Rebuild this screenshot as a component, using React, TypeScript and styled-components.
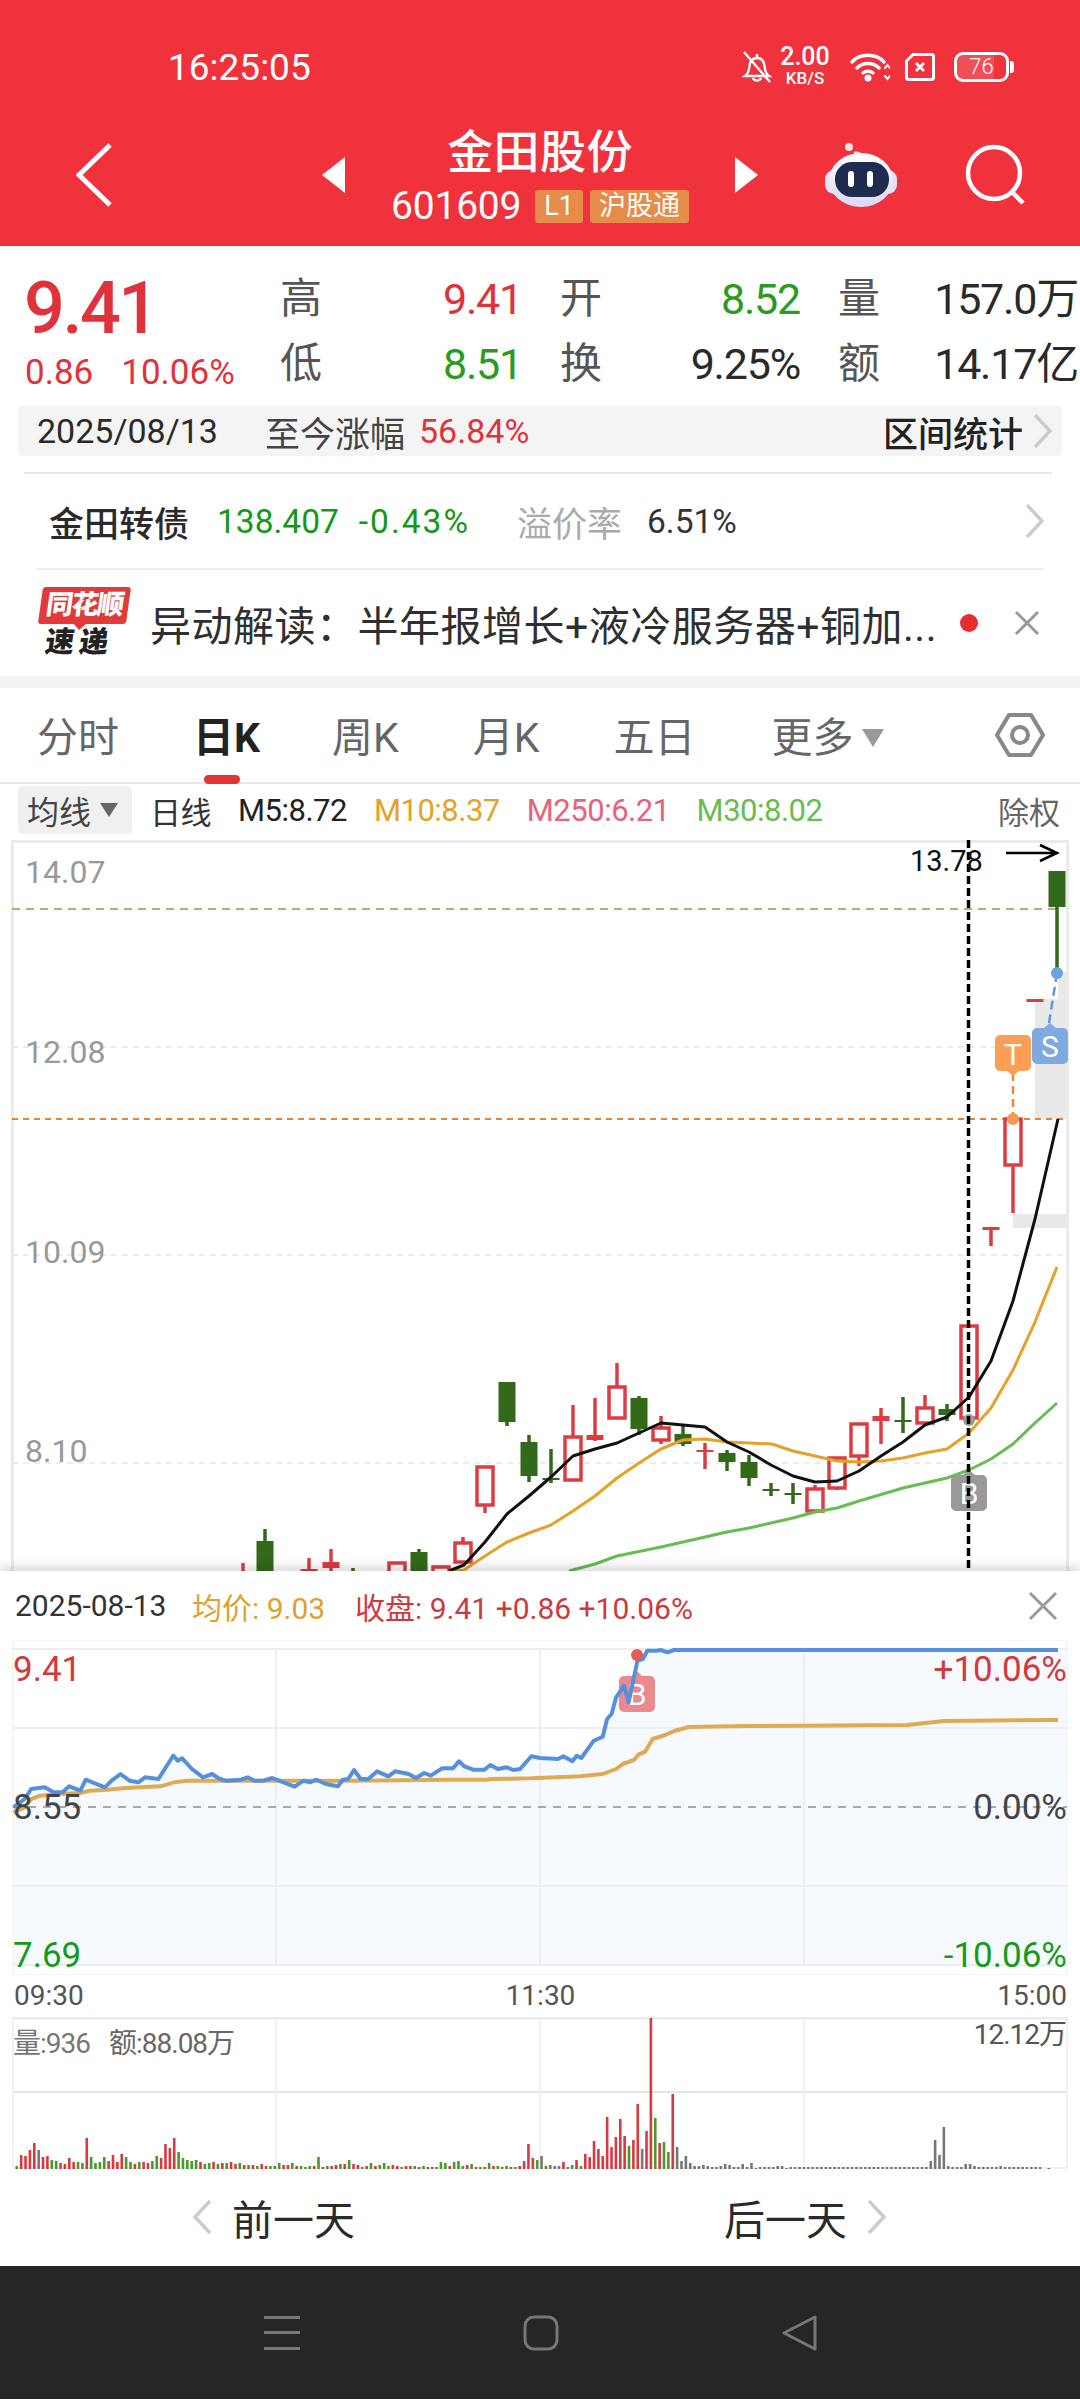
import styled, { createGlobalStyle } from "styled-components";

const RED = "#e0323a";
const GREEN = "#2a9a22";
const CANDLE_RED = "#dc3c42";
const CANDLE_GREEN = "#33691a";

const GlobalStyle = createGlobalStyle`
    html, body { margin: 0; padding: 0; background: #fff; }
    body { font-family: Roboto, "Noto Sans CJK SC", sans-serif; }
    * { box-sizing: border-box; }
`;

const Page = styled.div`
    width: 1080px;
    height: 2400px;
    overflow: hidden;
    background: #fff;
    display: flex;
    flex-direction: column;
`;

const Header = styled.header`
    height: 246px;
    background: #ef323c;
    color: #fff;
    flex: none;
`;

const StatusBar = styled.div`
    height: 44px;
    margin-top: 45px;
    display: flex;
    align-items: center;
    padding-left: 168px;
`;

const Clock = styled.div`
    font-size: 37px;
    width: 574px;
`;

const NetSpeed = styled.div`
    width: 50px;
    margin: -4px 20px 0 8px;
    text-align: center;
    line-height: 1;
    b {
        display: block;
        font-size: 25px;
        font-weight: 500;
    }
    span {
        display: block;
        font-size: 17px;
        font-weight: 500;
        margin-top: 1px;
    }
`;

const StatusIcon = styled.svg<{ $left?: number }>`
    flex: none;
    display: block;
    margin-left: ${(p) => p.$left ?? 0}px;
`;

const Battery = styled.div`
    width: 55px;
    height: 30px;
    margin-left: 19px;
    border: 3px solid #fff;
    border-radius: 9px;
    background: linear-gradient(90deg, rgba(255, 255, 255, 0.14) 76%, transparent 76%);
    font-size: 22px;
    font-weight: 300;
    line-height: 24px;
    text-align: center;
    position: relative;
    &::after {
        content: "";
        position: absolute;
        right: -8px;
        top: 6px;
        width: 4px;
        height: 12px;
        background: #fff;
        border-radius: 0 3px 3px 0;
    }
`;

const NavRow = styled.div`
    display: grid;
    grid-template-columns: 322px 436px 322px;
    margin-top: 34px;
    height: 104px;
    align-items: center;
`;

const BackButton = styled.div`
    padding-left: 76px;
    svg { display: block; }
`;

const StockTitle = styled.div`
    display: flex;
    align-items: center;
    justify-content: space-between;
`;

const Arrow = styled.div<{ $dir: "left" | "right" }>`
    width: 0;
    height: 0;
    border-top: 18px solid transparent;
    border-bottom: 18px solid transparent;
    ${(p) => (p.$dir === "left" ? "border-right: 23px solid #fff;" : "border-left: 23px solid #fff;")}
`;

const TitleBlock = styled.div`
    display: flex;
    flex-direction: column;
    align-items: center;
`;

const StockName = styled.div`
    font-size: 46px;
    font-weight: 500;
    line-height: 54px;
    letter-spacing: 0.4px;
    margin-top: -2px;
`;

const CodeRow = styled.div`
    display: flex;
    align-items: center;
    gap: 7px;
    margin-top: 10px;
    height: 34px;
`;

const StockCode = styled.div`
    font-size: 39px;
    letter-spacing: -0.2px;
    margin-right: 7px;
`;

const Tag = styled.div`
    background: #e58c4a;
    border-radius: 3px;
    height: 33px;
    padding: 0 9px;
    font-size: 27px;
    line-height: 33px;
`;

const NavActions = styled.div`
    display: flex;
    align-items: center;
    padding-left: 67px;
    gap: 68px;
    svg { display: block; flex: none; }
`;

const QuoteRow = styled.div`
    height: 160px;
    display: flex;
    flex: none;
`;

const PriceBlock = styled.div`
    width: 280px;
    padding: 27px 0 0 24px;
    color: ${RED};
`;

const BigPrice = styled.div`
    font-size: 72px;
    font-weight: 500;
    line-height: 72px;
    letter-spacing: -2.5px;
`;

const PriceChange = styled.div`
    margin-top: 8px;
    font-size: 35px;
    line-height: 40px;
    display: flex;
    gap: 28px;
    margin-left: 1px;
`;

const StatGrid = styled.div`
    display: grid;
    grid-template-columns: 42px 200px 80px 198px 80px 198px;
    grid-auto-rows: 65px;
    padding-top: 20px;
    align-items: center;
`;

const StatLabel = styled.div`
    font-size: 42px;
    color: #555;
    text-align: right;
    line-height: 50px;
`;

const StatValue = styled.div<{ $color?: string }>`
    font-size: 43px;
    text-align: right;
    letter-spacing: -1.2px;
    line-height: 50px;
    color: ${(p) => p.$color ?? "#2a2a2a"};
    white-space: nowrap;
`;

const RangeBar = styled.div`
    margin: 0 18px;
    height: 50px;
    background: #f4f4f4;
    border-radius: 4px;
    display: flex;
    align-items: center;
    padding: 0 9px 0 19px;
    flex: none;
`;

const RangeDate = styled.div`
    font-size: 34px;
    color: #2a2a2a;
    width: 228px;
`;

const RangeLabel = styled.div`
    font-size: 35px;
    color: #444;
    margin-right: 14px;
`;

const RangeValue = styled.div`
    font-size: 34px;
    color: ${RED};
    flex: 1;
`;

const RangeAction = styled.div`
    font-size: 35px;
    font-weight: 500;
    color: #222;
    margin-right: 10px;
`;

const BondRow = styled.div`
    margin: 16px 28px 0 24px;
    height: 96px;
    flex: none;
    border-top: 2px solid #e8e8e8;
    display: flex;
    align-items: center;
    padding: 0 7px 0 25px;
    font-size: 33.5px;
`;

const BondName = styled.div`
    font-size: 35px;
    font-weight: 500;
    color: #2a2a2a;
    margin-right: 28px;
`;

const BondValue = styled.div<{ $gap: number; $spacing?: number }>`
    color: #109a18;
    margin-right: ${(p) => p.$gap}px;
    letter-spacing: ${(p) => p.$spacing ?? 0}px;
`;

const BondLabel = styled.div`
    font-size: 35px;
    color: #aaa;
    margin-right: 25px;
`;

const BondRate = styled.div`
    color: #333;
    flex: 1;
`;

const NewsRow = styled.div`
    margin: 0 36px;
    height: 108px;
    flex: none;
    border-top: 2px solid #eee;
    display: flex;
    align-items: center;
    position: relative;
`;

const NewsLogo = styled.div`
    width: 88px;
    height: 72px;
    margin-left: 2px;
    flex: none;
    text-align: center;
    transform: skewX(-8deg);
`;

const LogoTop = styled.div`
    background: #e03a3a;
    color: #fff;
    font-size: 27px;
    font-weight: 900;
    line-height: 37px;
    height: 37px;
    border-radius: 3px;
    letter-spacing: -1.5px;
    position: relative;
    &::after {
        content: "";
        position: absolute;
        left: 36px;
        bottom: -6px;
        border-left: 6px solid transparent;
        border-right: 6px solid transparent;
        border-top: 6px solid #e03a3a;
    }
`;

const LogoBottom = styled.div`
    font-size: 29px;
    font-weight: 900;
    line-height: 36px;
    color: #222;
    letter-spacing: 5px;
`;

const NewsText = styled.div`
    font-size: 41px;
    color: #2f2f2f;
    margin-left: 24px;
    width: 800px;
    white-space: nowrap;
    overflow: hidden;
    flex: none;
    letter-spacing: 0.5px;
`;

const NewsDot = styled.div`
    width: 18px;
    height: 18px;
    border-radius: 50%;
    background: #e62c30;
    margin-left: 10px;
    flex: none;
`;

const CloseIcon = styled.svg<{ $left?: number }>`
    display: block;
    flex: none;
    margin-left: ${(p) => p.$left ?? 0}px;
`;

const Band = styled.div`
    height: 12px;
    background: #f3f3f3;
    flex: none;
`;

const TabBar = styled.div`
    height: 96px;
    flex: none;
    border-bottom: 2px solid #e8e8e8;
    position: relative;
    display: flex;
    align-items: flex-start;
    padding-top: 25px;
`;

const Tab = styled.div<{ $left: number; $active?: boolean }>`
    margin-left: ${(p) => p.$left}px;
    font-size: 41px;
    line-height: 50px;
    color: ${(p) => (p.$active ? "#222" : "#666")};
    font-weight: ${(p) => (p.$active ? 700 : 400)};
    white-space: nowrap;
    display: flex;
    align-items: center;
    position: relative;
    ${(p) =>
        p.$active &&
        `&::after {
            content: "";
            position: absolute;
            left: 11px;
            top: 62px;
            width: 36px;
            height: 9px;
            border-radius: 5px;
            background: #e53238;
        }`}
`;

const Caret = styled.span`
    width: 0;
    height: 0;
    margin-left: 8px;
    border-left: 11px solid transparent;
    border-right: 11px solid transparent;
    border-top: 18px solid #999;
`;

const SettingsIcon = styled.svg`
    position: absolute;
    left: 995px;
    top: 24px;
`;

const MaRow = styled.div`
    height: 56px;
    flex: none;
    padding: 2px 20px 6px 18px;
    display: flex;
    align-items: center;
    font-size: 31px;
    letter-spacing: -0.5px;
`;

const MaSelect = styled.div`
    width: 114px;
    height: 48px;
    background: #f0f0f0;
    border-radius: 5px;
    display: flex;
    align-items: center;
    padding-left: 9px;
    font-size: 32px;
    color: #444;
    letter-spacing: 0;
    span {
        margin-left: 9px;
        border-left: 9px solid transparent;
        border-right: 9px solid transparent;
        border-top: 14px solid #666;
    }
`;

const MaLabel = styled.div`
    margin-left: 18px;
    margin-right: 27px;
    color: #333;
    font-size: 31px;
`;

const MaValue = styled.div<{ $color: string }>`
    color: ${(p) => p.$color};
    margin-right: 27px;
    white-space: nowrap;
`;

const MaRight = styled.div`
    margin-left: auto;
    font-size: 31px;
    color: #666;
    letter-spacing: 0;
`;

const ChartArea = styled.div`
    height: 731px;
    flex: none;
    overflow: hidden;
    svg { display: block; }
`;

const Sheet = styled.section`
    height: 695px;
    flex: none;
    background: #fff;
    box-shadow: 0 -5px 9px rgba(0, 0, 0, 0.14);
    position: relative;
`;

const SheetHeader = styled.div`
    height: 69px;
    display: flex;
    align-items: center;
    padding: 0 22px 0 15px;
    font-size: 30px;
    white-space: nowrap;
`;

const SheetDate = styled.div`
    color: #333;
    width: 177px;
`;

const SheetAvg = styled.div`
    color: #e0a030;
    width: 163px;
`;

const SheetClose = styled.div`
    color: #cc3a3e;
    flex: 1;
`;

const ChartBlock = styled.div`
    svg { display: block; }
`;

const DayPager = styled.div`
    height: 98px;
    display: grid;
    grid-template-columns: 540px 540px;
    align-items: center;
    padding-bottom: 4px;
`;

const PagerButton = styled.div<{ $pad: number }>`
    display: flex;
    align-items: center;
    gap: 20px;
    font-size: 41px;
    color: #2a2a2a;
    padding-left: ${(p) => p.$pad}px;
    svg { display: block; }
`;

const SystemNav = styled.nav`
    height: 133px;
    flex: none;
    background: #262626;
    display: flex;
    align-items: center;
    padding-left: 264px;
    gap: 223px;
    svg { display: block; flex: none; }
`;

const TimeAxis = styled.div`
    height: 42px;
    display: flex;
    justify-content: space-between;
    align-items: center;
    padding: 0 13px 2px 14px;
    font-size: 28px;
    color: #555;
`;

// candles: x, high, body top, body bottom, low, colour, hollow
type Candle = [number, number, number, number, number, "r" | "g", boolean?];

const candles: Candle[] = [
    [243, 1564, 1580, 1580, 1580, "r"],
    [265, 1530, 1542, 1580, 1580, "g"],
    [309, 1559, 1570, 1572, 1580, "r"],
    [331, 1550, 1563, 1569, 1580, "r"],
    [353, 1569, 1580, 1580, 1580, "g"],
    [397, 1563, 1564, 1590, 1590, "r", true],
    [419, 1550, 1553, 1580, 1580, "g"],
    [441, 1567, 1568, 1590, 1590, "r", true],
    [463, 1538, 1544, 1563, 1563, "r", true],
    [485, 1468, 1468, 1506, 1514, "r", true],
    [507, 1383, 1383, 1423, 1427, "g"],
    [529, 1436, 1443, 1477, 1483, "g"],
    [551, 1450, 1479, 1481, 1484, "g"],
    [573, 1406, 1438, 1481, 1481, "r", true],
    [595, 1399, 1436, 1441, 1442, "r"],
    [617, 1364, 1388, 1419, 1419, "r", true],
    [639, 1397, 1399, 1430, 1436, "g"],
    [661, 1417, 1429, 1441, 1445, "r", true],
    [683, 1427, 1435, 1445, 1447, "g"],
    [705, 1444, 1451, 1453, 1470, "r"],
    [727, 1451, 1454, 1463, 1472, "g"],
    [749, 1456, 1463, 1479, 1487, "g"],
    [771, 1484, 1490, 1492, 1497, "g"],
    [793, 1484, 1494, 1496, 1505, "g"],
    [815, 1486, 1490, 1512, 1512, "r", true],
    [837, 1459, 1459, 1489, 1491, "r", true],
    [859, 1425, 1425, 1457, 1467, "r", true],
    [881, 1409, 1417, 1422, 1445, "r"],
    [903, 1398, 1421, 1423, 1434, "g"],
    [925, 1396, 1409, 1424, 1424, "r", true],
    [947, 1405, 1410, 1416, 1422, "g"],
    [969, 1327, 1327, 1419, 1419, "r", true],
    [991, 1228, 1228, 1231, 1247, "r"],
    [1013, 1120, 1120, 1166, 1214, "r", true],
    [1035, 1000, 1000, 1003, 1003, "r"],
    [1057, 872, 872, 908, 974, "g"],
];

const ma5 = "449,1572 464,1566 485,1543 507,1515 529,1497 551,1478 573,1457 595,1450 617,1444 639,1434 661,1424 683,1426 705,1428 727,1443 749,1453 771,1466 793,1477 815,1483 837,1482 859,1472 881,1457 903,1443 925,1426 947,1418 969,1398 991,1362 1013,1302 1035,1220 1058,1120";
const ma10 = "449,1572 464,1571 485,1557 507,1543 529,1534 551,1526 573,1512 595,1497 617,1479 639,1464 661,1450 683,1441 705,1440 727,1443 749,1444 772,1445 793,1452 815,1457 837,1462 859,1463 881,1462 903,1459 925,1454 947,1450 969,1434 991,1409 1013,1371 1035,1323 1057,1268";
const ma30 = "569,1572 595,1565 617,1557 661,1548 705,1538 727,1533 749,1529 793,1519 815,1513 837,1509 859,1502 903,1489 947,1479 969,1471 991,1460 1013,1445 1035,1424 1057,1404";

const priceLabels: [string, number][] = [["14.07", 884], ["12.08", 1064], ["10.09", 1264], ["8.10", 1463]];

function KChart() {
    return (
        <svg width={1080} height={731} viewBox="0 841 1080 731">
            <rect x={12} y={841} width={1056} height={3} fill="#ebebeb" />
            <rect x={11} y={841} width={3} height={731} fill="#ebebeb" />
            <rect x={1066} y={841} width={3} height={731} fill="#ebebeb" />
            {[1048, 1256, 1464].map((y) => (
                <line key={y} x1={12} x2={1066} y1={y} y2={y} stroke="#e6e6e6" strokeWidth={1.5} strokeDasharray="6 5" />
            ))}
            <rect x={1058} y={973} width={10} height={27} fill="#e9e9e9" />
            <rect x={1035} y={1000} width={33} height={120} fill="#e9e9e9" />
            <rect x={1013} y={1215} width={55} height={14} fill="#e9e9e9" />
            <line x1={12} x2={1057} y1={910} y2={910} stroke="#bfa878" strokeWidth={2} strokeDasharray="8 6" />
            <line x1={12} x2={1067} y1={1120} y2={1120} stroke="#e0853c" strokeWidth={2} strokeDasharray="6 5" />
            {priceLabels.map(([t, y]) => (
                <text key={t} x={25} y={y} fontSize={32} fill="#999" fontFamily="Roboto">{t}</text>
            ))}
            {candles.map(([x, hi, top, bot, lo, c, hollow]) => {
                const color = c === "r" ? CANDLE_RED : CANDLE_GREEN;
                return (
                    <g key={x}>
                        <line x1={x} x2={x} y1={hi} y2={lo} stroke={color} strokeWidth={3.5} />
                        {hollow ? (
                            <rect x={x - 8} y={top} width={16} height={bot - top} fill="#fff" stroke={color} strokeWidth={3.5} />
                        ) : (
                            <rect x={x - 8.5} y={top} width={17} height={bot - top} fill={color} />
                        )}
                    </g>
                );
            })}
            <polyline points={ma30} fill="none" stroke="#68bd50" strokeWidth={3} strokeLinejoin="round" />
            <polyline points={ma10} fill="none" stroke="#e5a128" strokeWidth={3} strokeLinejoin="round" />
            <polyline points={ma5} fill="none" stroke="#111" strokeWidth={3} strokeLinejoin="round" />

            <line x1={1013} x2={1013} y1={1074} y2={1118} stroke="#e98a3c" strokeWidth={2.5} strokeDasharray="8 5" />
            <circle cx={1013} cy={1120} r={6} fill="#f59a50" />
            <path d="M1000 1036h26a5 5 0 0 1 5 5v26a5 5 0 0 1-5 5h-7l-6 5-6-5h-7a5 5 0 0 1-5-5v-26a5 5 0 0 1 5-5z" fill="#fb9f57" />
            <text x={1013} y={1066} fontSize={30} fill="#fff" textAnchor="middle" fontFamily="Roboto">T</text>

            <line x1={1057} x2={1049} y1={974} y2={1024} stroke="#5f98e0" strokeWidth={2.5} strokeDasharray="9 5" />
            <circle cx={1057} cy={974} r={6} fill="#6ba3e6" />
            <path d="M1037 1029h7l6-5 6 5h7a5 5 0 0 1 5 5v26a5 5 0 0 1-5 5h-26a5 5 0 0 1-5-5v-26a5 5 0 0 1 5-5z" fill="#7faae0" />
            <text x={1050} y={1058} fontSize={30} fill="#fff" textAnchor="middle" fontFamily="Roboto">S</text>

            <circle cx={969} cy={1421} r={6} fill="#999" />
            <path d="M956 1476h7l6-5 6 5h7a5 5 0 0 1 5 5v26a5 5 0 0 1-5 5h-26a5 5 0 0 1-5-5v-26a5 5 0 0 1 5-5z" fill="#999" />
            <text x={969} y={1505} fontSize={30} fill="#fff" textAnchor="middle" fontFamily="Roboto">B</text>

            <line x1={968.5} x2={968.5} y1={841} y2={1572} stroke="#000" strokeWidth={3.5} strokeDasharray="8 4" />
            <text x={910} y={872} fontSize={29} fill="#111" fontFamily="Roboto">13.78</text>
            <path d="M1006 854h50M1040 846l17 8-17 8" fill="none" stroke="#000" strokeWidth={2.5} />
        </svg>
    );
}

// traced from the minute chart, scaled to page pixels
const toMinute = (raw: number[]) => {
    const out: string[] = [];
    for (let i = 0; i < raw.length; i += 2) {
        out.push((raw[i] / 2.24).toFixed(1) + "," + (1570 + raw[i + 1] / 3).toFixed(1));
    }
    return out;
};

const blueRaw = [30, 715, 55, 690, 70, 660, 100, 655, 120, 670, 140, 670, 155, 652, 180, 665, 192, 632, 235, 655, 250, 635, 270, 615, 290, 635, 310, 640, 325, 625, 355, 630, 370, 598, 388, 560, 398, 575, 408, 568, 430, 600, 455, 625, 475, 615, 490, 628, 505, 635, 540, 632, 555, 625, 570, 635, 590, 635, 610, 627, 635, 640, 660, 653, 680, 635, 695, 640, 708, 632, 730, 645, 757, 652, 768, 632, 780, 630, 793, 603, 808, 630, 825, 630, 845, 607, 870, 622, 885, 607, 915, 615, 932, 627, 950, 612, 965, 620, 990, 598, 1015, 598, 1028, 577, 1040, 592, 1060, 602, 1085, 602, 1098, 588, 1115, 600, 1135, 595, 1150, 603, 1165, 600, 1190, 562, 1210, 567, 1250, 570, 1262, 562, 1282, 577, 1292, 560, 1302, 567, 1330, 515, 1350, 503, 1360, 450, 1370, 435, 1380, 385, 1398, 350, 1408, 400, 1428, 275, 1440, 270, 1450, 245, 1470, 245, 1480, 243, 1495, 250, 1510, 243, 2370, 243];
const goldRaw = [30, 730, 55, 715, 70, 690, 90, 680, 130, 675, 180, 672, 200, 665, 240, 662, 280, 657, 360, 652, 390, 640, 420, 635, 600, 635, 800, 635, 1000, 632, 1090, 632, 1100, 630, 1190, 628, 1300, 622, 1350, 615, 1380, 600, 1395, 585, 1420, 573, 1430, 557, 1445, 548, 1462, 510, 1490, 498, 1510, 486, 1543, 474, 1667, 471, 2032, 468, 2115, 456, 2370, 453];

const bluePoints = toMinute(blueRaw);
const goldPoints = toMinute(goldRaw).join(" ");
const fillPoints = [...bluePoints, "1058,1966", "13,1966"].join(" ");

const minuteLeft: [string, number, string][] = [["9.41", 1682, "#d2383c"], ["8.55", 1820, "#444"], ["7.69", 1968, "#159a1c"]];
const minuteRight: [string, number, string][] = [["+10.06%", 1682, "#d2383c"], ["0.00%", 1820, "#444"], ["-10.06%", 1968, "#159a1c"]];

function MinuteChart() {
    return (
        <svg width={1080} height={335} viewBox="0 1641 1080 335">
            <rect x={13} y={1641} width={1054} height={335} fill="none" stroke="#f2f2f2" strokeWidth={1.5} />
            <polygon points={fillPoints} fill="#f6faff" />
            <rect x={1058} y={1652} width={9} height={314} fill="#f6faff" />
            {[1650, 1729, 1887, 1966].map((y) => (
                <line key={y} x1={13} x2={1067} y1={y} y2={y} stroke="#e8e8e8" strokeWidth={1.5} />
            ))}
            {[276, 540, 804].map((x) => (
                <line key={x} x1={x} x2={x} y1={1650} y2={1966} stroke="#e8eaee" strokeWidth={1.5} />
            ))}
            <line x1={13} x2={1067} y1={1808} y2={1808} stroke="#a8a8a8" strokeWidth={2} strokeDasharray="8 7" />
            <path d="M624 1677h8l5-5 5 5h8a5 5 0 0 1 5 5v26a5 5 0 0 1-5 5h-26a5 5 0 0 1-5-5v-26a5 5 0 0 1 5-5z" fill="#e98a8f" />
            <text x={637} y={1706} fontSize={30} fill="#fff" textAnchor="middle" fontFamily="Roboto">B</text>
            <polyline points={goldPoints} fill="none" stroke="#e0aa55" strokeWidth={4} strokeLinejoin="round" />
            <polyline points={bluePoints.join(" ")} fill="none" stroke="#5590dc" strokeWidth={4} strokeLinejoin="round" />
            <circle cx={637} cy={1656} r={6} fill="#e85a5a" />
            {minuteLeft.map(([t, y, c]) => (
                <text key={t} x={13} y={y} fontSize={35} fill={c} fontFamily="Roboto">{t}</text>
            ))}
            {minuteRight.map(([t, y, c]) => (
                <text key={t} x={1067} y={y} fontSize={35} fill={c} textAnchor="end" fontFamily="Roboto">{t}</text>
            ))}
        </svg>
    );
}

const volumeHeights = [
    3, 14, 13, 19, 26, 19, 12, 13, 9, 8, 6, 5, 11, 7, 7, 6, 31, 12, 6, 7, 12, 8, 14, 7, 15, 12, 7, 5, 7, 7, 6, 8, 13, 11, 25, 21, 31, 17, 11, 9, 8, 9, 7, 5, 6,
    7, 5, 6, 6, 7, 5, 6, 4, 4, 4, 3, 5, 3, 3, 3, 6, 4, 4, 6, 3, 3, 2, 3, 3, 12, 2, 3, 3, 4, 5, 5, 9, 5, 4, 2, 3, 6, 3, 4, 6, 3, 4, 3, 2, 3, 3, 3, 2, 3, 2, 2, 2, 7, 6, 3, 7, 8, 3, 4, 5, 2, 2, 2, 6, 3, 3, 2, 3, 2, 2, 3,
    8, 25, 11, 9, 13, 3, 4, 3, 3, 7, 2, 4, 9, 3, 15, 12, 28, 20, 13, 52, 22, 32, 50, 33, 23, 29, 65, 20, 38, 151, 51, 26, 27, 17, 75,
    22, 8, 13, 6, 3, 3, 4, 3, 2, 2, 3, 5, 4, 2, 2, 5, 2, 6, 1, 2, 2, 2, 2, 3, 3, 1,
    2, 2, 2, 2, 2, 2, 2, 2, 2, 2, 2, 2, 2, 2, 2, 2, 2, 2, 2, 2, 2, 2, 2, 2, 2, 2, 2, 2, 2, 2, 2, 2,
    8, 29, 14, 42, 3, 2, 2, 2, 5, 5, 3, 2, 2, 2, 2, 2, 3, 2, 2, 2, 2, 2, 2, 2, 2, 2, 0, 1,
];
const volumeColors =
    "grrrrkrrggrrrrggr" + "gggg" + "rrrrgg" + "rgrrggrrrr" + "ggggg" + "rgg" +
    "rgrgrrgrgrgrrgggrrgrgggrgrgrrgrgrrgrgrgggrrgrrgrgrrgggrgggrgrgrgrgggrgr" +
    "rrrgkgkkkrkgrgrrrrrrrrrrgrrkrrgrggr";

const VOLUME_COLOR: Record<string, string> = { r: "#d63a40", g: "#4a9a2a", k: "#777" };

function VolumeChart() {
    return (
        <svg width={1080} height={153} viewBox="0 2018 1080 153">
            <line x1={13} x2={1067} y1={2019} y2={2019} stroke="#ececec" strokeWidth={3} />
            <line x1={13} x2={1067} y1={2093} y2={2093} stroke="#e4e4e4" strokeWidth={2} />
            <line x1={13} x2={1067} y1={2169} y2={2169} stroke="#ececec" strokeWidth={1.5} />
            {[13, 276, 540, 804, 1067].map((x) => (
                <line key={x} x1={x} x2={x} y1={2018} y2={2169} stroke="#ececec" strokeWidth={1.5} />
            ))}
            {volumeHeights.map((h, i) => (
                <rect key={i} x={15.5 + i * 4.373} y={2170 - h} width={2.6} height={h} fill={VOLUME_COLOR[volumeColors[i] ?? "k"]} />
            ))}
            <text x={13} y={2054} fontSize={28} fill="#777" fontFamily="Roboto, 'Noto Sans CJK SC'" letterSpacing={-1}>量:936</text>
            <text x={109} y={2054} fontSize={28} fill="#666" fontFamily="Roboto, 'Noto Sans CJK SC'" letterSpacing={-1}>额:88.08万</text>
            <text x={1066} y={2045} fontSize={28} fill="#555" textAnchor="end" fontFamily="Roboto, 'Noto Sans CJK SC'" letterSpacing={-1}>12.12万</text>
        </svg>
    );
}

const Chevron = ({ left, color = "#ccc" }: { left?: boolean; color?: string }) => (
    <svg width={20} height={34} viewBox="0 0 20 34">
        <path d={left ? "M18 1 3 17l15 16" : "M2 1l15 16L2 33"} fill="none" stroke={color} strokeWidth={3.5} />
    </svg>
);

export default function App() {
    return (
        <Page>
            <GlobalStyle />
            <Header>
                <StatusBar>
                    <Clock>16:25:05</Clock>
                    <StatusIcon width={30} height={32} viewBox="0 0 30 32" fill="none" stroke="#fff" strokeWidth={2.4}>
                        <path d="M3 25c3-2 4-5 4.500-10 .5-5 3-8 7.500-8s7 3 7.500 8c.5 5 1.500 8 4.500 10z" />
                        <path d="M11 27c1 3.500 7 3.500 8 0M15 3v4M2 1l26 30" />
                    </StatusIcon>
                    <NetSpeed>
                        <b>2.00</b>
                        <span>KB/S</span>
                    </NetSpeed>
                    <StatusIcon width={40} height={30} viewBox="0 0 40 30" fill="none" stroke="#fff" strokeWidth={3.4} strokeLinecap="round">
                        <path d="M2 10C10 1 26 1 34 10M7 16c6-6 16-6 22 0M13 21c3-2.500 7-2.500 10 0" />
                        <circle cx={18} cy={26} r={1.8} fill="#fff" />
                        <path d="M35 16l2.500-3 2.500 3M35 24l2.500 3 2.500-3" strokeWidth={2} />
                    </StatusIcon>
                    <StatusIcon $left={15} width={30} height={28} viewBox="0 0 30 28">
                        <path d="M8 1.500h18.500a2 2 0 0 1 2 2v21a2 2 0 0 1-2 2h-23a2 2 0 0 1-2-2V8z" fill="none" stroke="#fff" strokeWidth={3} />
                        <path d="M11 10l8 8M19 10l-8 8" stroke="#fff" strokeWidth={2.800} />
                    </StatusIcon>
                    <Battery>76</Battery>
                </StatusBar>
                <NavRow>
                    <BackButton>
                        <svg width={36} height={64} viewBox="0 0 36 64" fill="none" stroke="#fff" strokeWidth={5}>
                            <path d="M34 2 3 32l31 30" />
                        </svg>
                    </BackButton>
                    <StockTitle>
                        <Arrow $dir="left" />
                        <TitleBlock>
                            <StockName>金田股份</StockName>
                            <CodeRow>
                                <StockCode>601609</StockCode>
                                <Tag>L1</Tag>
                                <Tag>沪股通</Tag>
                            </CodeRow>
                        </TitleBlock>
                        <Arrow $dir="right" />
                    </StockTitle>
                    <NavActions>
                        <svg width={72} height={66} viewBox="0 0 72 66">
                            <defs>
                                <linearGradient id="robotShell" x1="0" y1="0" x2="0" y2="1">
                                    <stop offset="0" stopColor="#fff" />
                                    <stop offset="1" stopColor="#dcd8f6" />
                                </linearGradient>
                            </defs>
                            <path d="M29 11c6-1 9 2 9 6" fill="none" stroke="#f4dfe2" strokeWidth={2.5} />
                            <circle cx={24} cy={5} r={4} fill="#f6e3e6" />
                            <rect x={0} y={28} width={72} height={24} rx={9} fill="#e4e0f8" />
                            <ellipse cx={36} cy={38} rx={32} ry={27} fill="url(#robotShell)" />
                            <rect x={10} y={20} width={54} height={35} rx={17} fill="#1f2c50" />
                            <rect x={23} y={29} width={6} height={16} rx={3} fill="#fff" />
                            <rect x={42} y={29} width={6} height={16} rx={3} fill="#fff" />
                        </svg>
                        <svg width={62} height={62} viewBox="0 0 62 62" fill="none" stroke="#fff" strokeWidth={4.500}>
                            <circle cx={29} cy={29} r={26} />
                            <path d="M47 48l11 11" />
                        </svg>
                    </NavActions>
                </NavRow>
            </Header>

            <QuoteRow>
                <PriceBlock>
                    <BigPrice>9.41</BigPrice>
                    <PriceChange>
                        <span>0.86</span>
                        <span>10.06%</span>
                    </PriceChange>
                </PriceBlock>
                <StatGrid>
                    <StatLabel>高</StatLabel>
                    <StatValue $color={RED}>9.41</StatValue>
                    <StatLabel>开</StatLabel>
                    <StatValue $color={GREEN}>8.52</StatValue>
                    <StatLabel>量</StatLabel>
                    <StatValue>157.0万</StatValue>
                    <StatLabel>低</StatLabel>
                    <StatValue $color={GREEN}>8.51</StatValue>
                    <StatLabel>换</StatLabel>
                    <StatValue>9.25%</StatValue>
                    <StatLabel>额</StatLabel>
                    <StatValue>14.17亿</StatValue>
                </StatGrid>
            </QuoteRow>

            <RangeBar>
                <RangeDate>2025/08/13</RangeDate>
                <RangeLabel>至今涨幅</RangeLabel>
                <RangeValue>56.84%</RangeValue>
                <RangeAction>区间统计</RangeAction>
                <Chevron />
            </RangeBar>

            <BondRow>
                <BondName>金田转债</BondName>
                <BondValue $gap={20}>138.407</BondValue>
                <BondValue $gap={47} $spacing={2}>-0.43%</BondValue>
                <BondLabel>溢价率</BondLabel>
                <BondRate>6.51%</BondRate>
                <Chevron />
            </BondRow>

            <NewsRow>
                <NewsLogo>
                    <LogoTop>同花顺</LogoTop>
                    <LogoBottom>速递</LogoBottom>
                </NewsLogo>
                <NewsText>异动解读：半年报增长+液冷服务器+铜加...</NewsText>
                <NewsDot />
                <CloseIcon $left={36} width={26} height={26} viewBox="0 0 26 26">
                    <path d="M2 2l22 22M24 2 2 24" stroke="#999" strokeWidth={3} fill="none" />
                </CloseIcon>
            </NewsRow>

            <Band />

            <TabBar>
                <Tab $left={37}>分时</Tab>
                <Tab $left={74} $active>日K</Tab>
                <Tab $left={72}>周K</Tab>
                <Tab $left={74}>月K</Tab>
                <Tab $left={74}>五日</Tab>
                <Tab $left={76}>更多<Caret /></Tab>
                <SettingsIcon width={50} height={46} viewBox="0 0 50 46" fill="none" stroke="#888" strokeWidth={4} strokeLinejoin="round">
                    <path d="M14 3h22l12 20-12 20H14L2 23z" />
                    <circle cx={25} cy={23} r={8} />
                </SettingsIcon>
            </TabBar>

            <MaRow>
                <MaSelect>均线<span /></MaSelect>
                <MaLabel>日线</MaLabel>
                <MaValue $color="#222">M5:8.72</MaValue>
                <MaValue $color="#e5a128">M10:8.37</MaValue>
                <MaValue $color="#e8637a">M250:6.21</MaValue>
                <MaValue $color="#68bd50">M30:8.02</MaValue>
                <MaRight>除权</MaRight>
            </MaRow>

            <ChartArea>
                <KChart />
            </ChartArea>

            <Sheet>
                <SheetHeader>
                    <SheetDate>2025-08-13</SheetDate>
                    <SheetAvg>均价: 9.03</SheetAvg>
                    <SheetClose>收盘: 9.41 +0.86 +10.06%</SheetClose>
                    <CloseIcon width={30} height={30} viewBox="0 0 30 30">
                        <path d="M2 2l26 26M28 2 2 28" stroke="#999" strokeWidth={3} fill="none" />
                    </CloseIcon>
                </SheetHeader>
                <ChartBlock>
                    <MinuteChart />
                </ChartBlock>
                <TimeAxis>
                    <span>09:30</span>
                    <span>11:30</span>
                    <span>15:00</span>
                </TimeAxis>
                <ChartBlock>
                    <VolumeChart />
                </ChartBlock>
                <DayPager>
                    <PagerButton $pad={192}>
                        <Chevron left />
                        前一天
                    </PagerButton>
                    <PagerButton $pad={184}>
                        后一天
                        <Chevron />
                    </PagerButton>
                </DayPager>
            </Sheet>

            <SystemNav>
                <svg width={36} height={36} viewBox="0 0 36 36" fill="#777">
                    <rect y={1} width={36} height={3} />
                    <rect y={16} width={36} height={3} />
                    <rect y={32} width={36} height={3} />
                </svg>
                <svg width={36} height={36} viewBox="0 0 36 36" fill="none" stroke="#777" strokeWidth={3}>
                    <rect x={2} y={2} width={32} height={32} rx={9} />
                </svg>
                <svg width={36} height={36} viewBox="0 0 36 36" fill="none" stroke="#777" strokeWidth={3} strokeLinejoin="round">
                    <path d="M33 2v32L2 18z" />
                </svg>
            </SystemNav>
        </Page>
    );
}
